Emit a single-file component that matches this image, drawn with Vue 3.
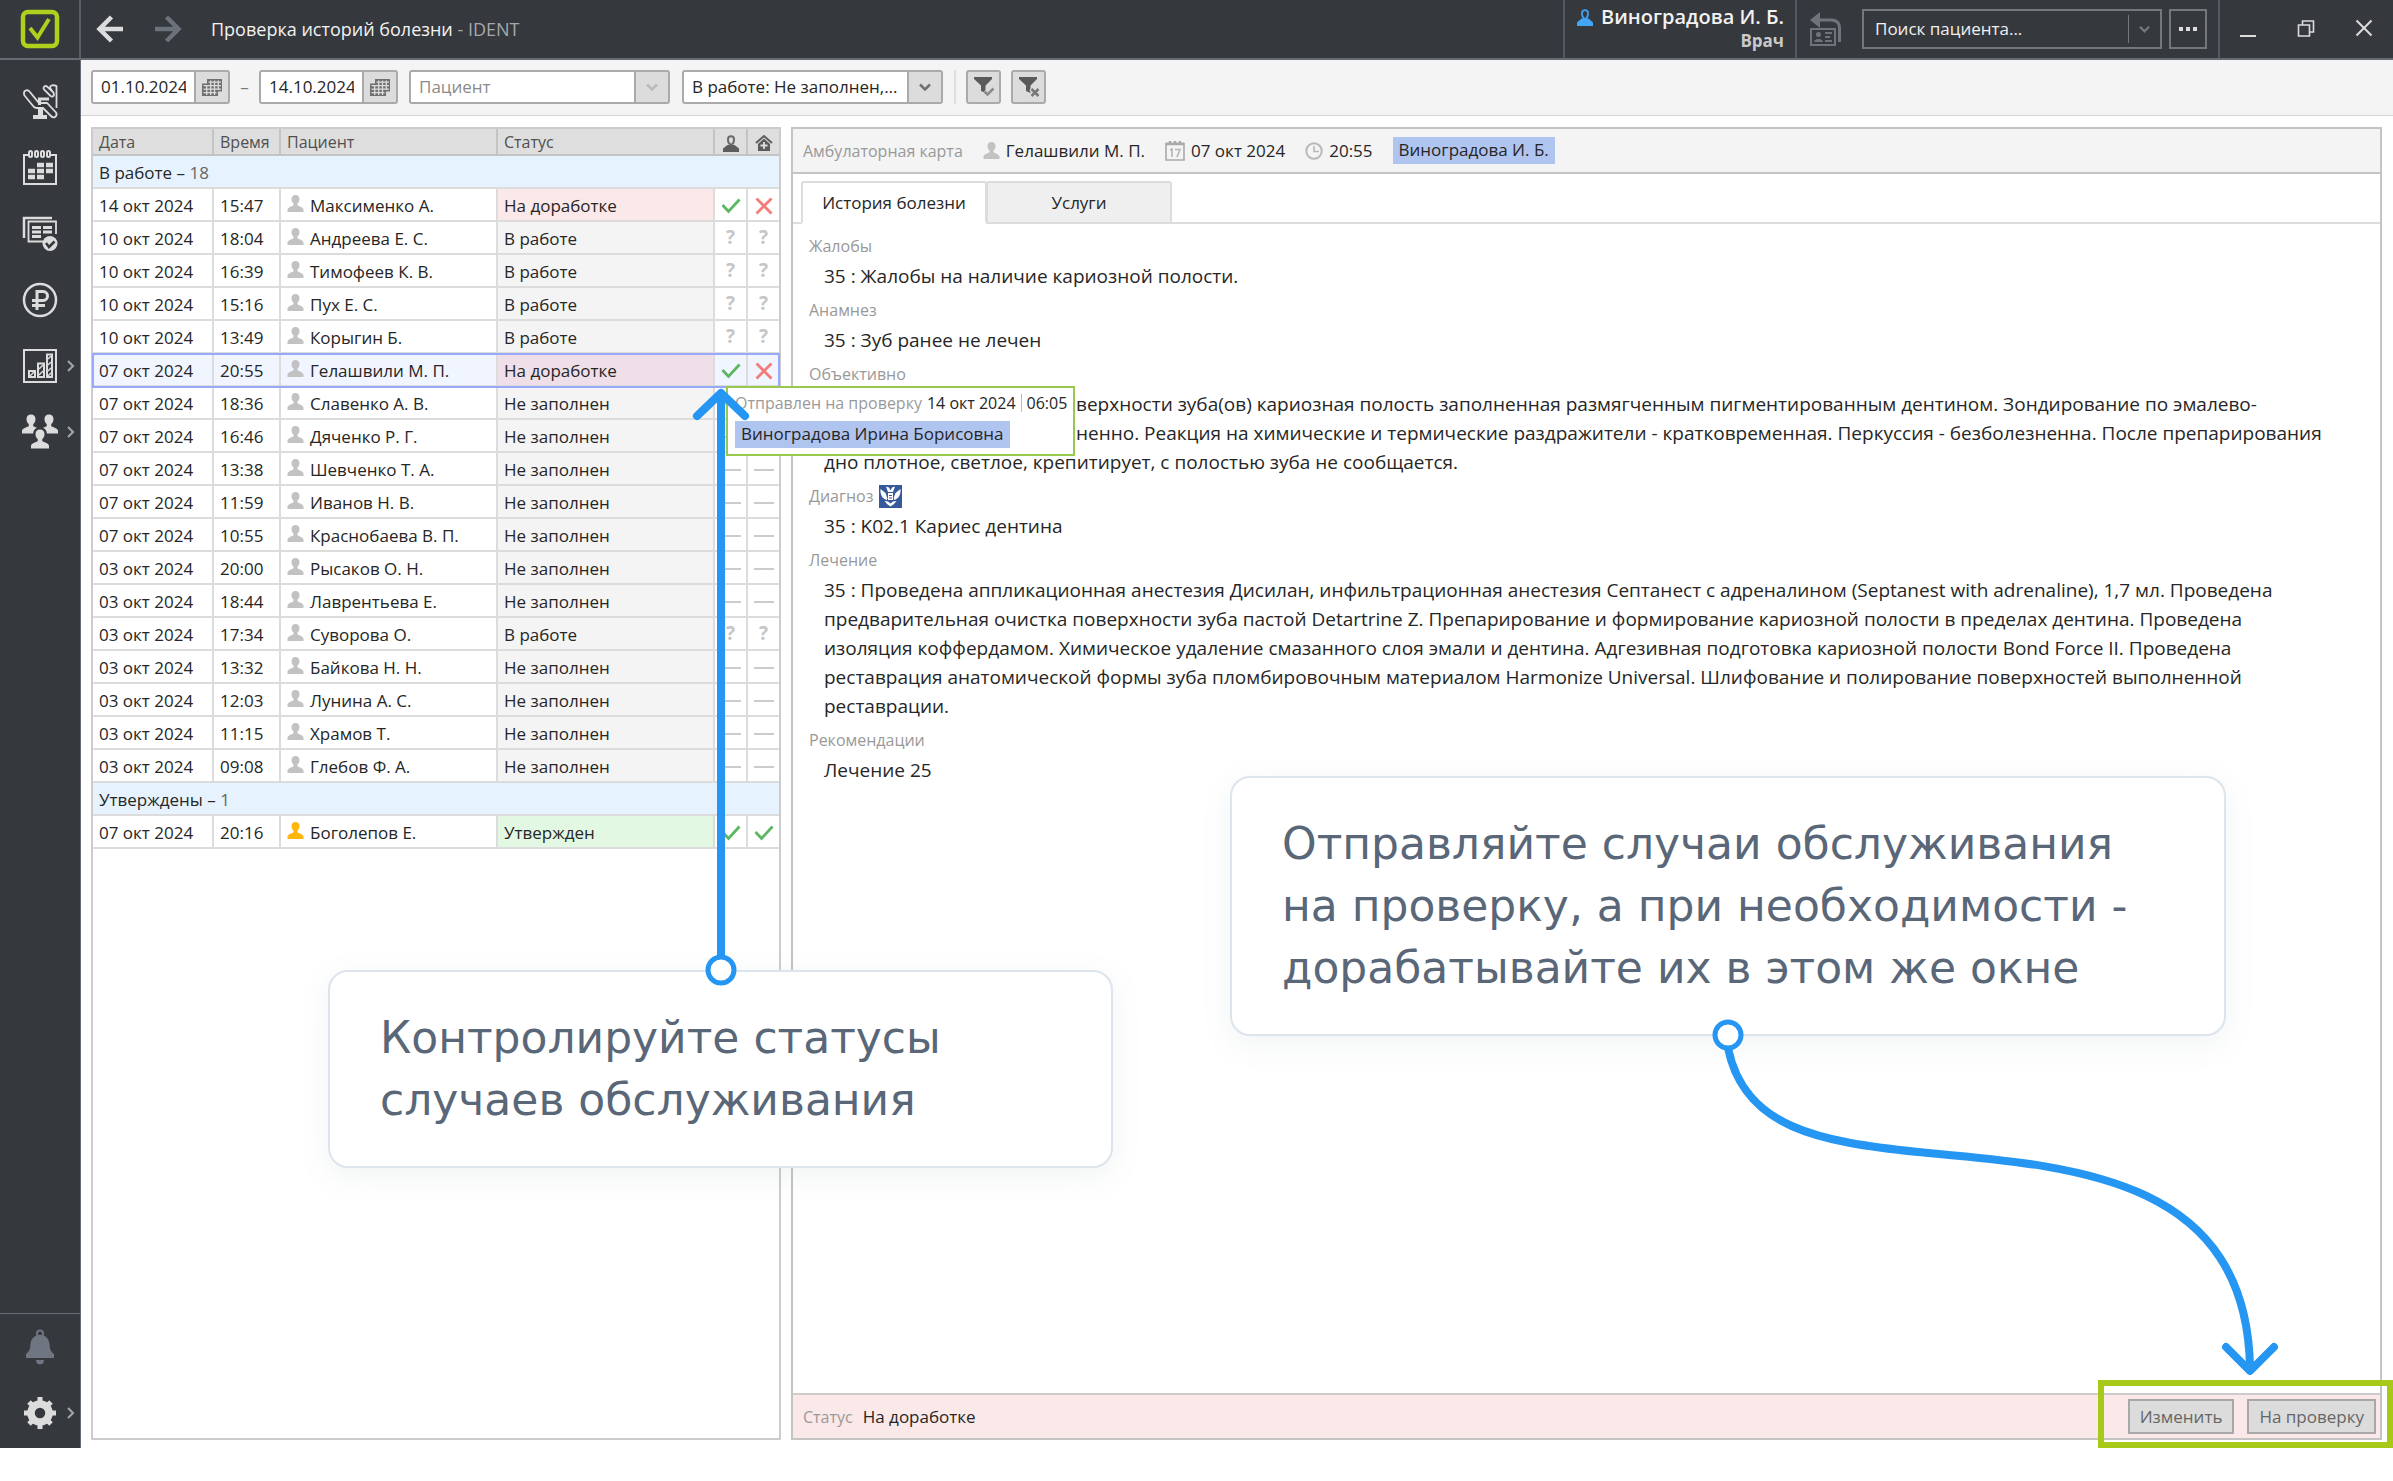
<script setup>
import { ref } from 'vue'

const dateFrom = ref('01.10.2024')
const dateTo = ref('14.10.2024')
const patientFilter = ref('')
const search = ref('')
const activeTab = ref('history')

const row = (date, time, patient, status, doctor, clinic, extra = {}) => ({ date, time, patient, status, doctor, clinic, ...extra })

const groups = [
  {
    title: 'В работе',
    count: 18,
    rows: [
      row('14 окт 2024', '15:47', 'Максименко А.', 'На доработке', 'yes', 'no'),
      row('10 окт 2024', '18:04', 'Андреева Е. С.', 'В работе', 'ask', 'ask'),
      row('10 окт 2024', '16:39', 'Тимофеев К. В.', 'В работе', 'ask', 'ask'),
      row('10 окт 2024', '15:16', 'Пух Е. С.', 'В работе', 'ask', 'ask'),
      row('10 окт 2024', '13:49', 'Корыгин Б.', 'В работе', 'ask', 'ask'),
      row('07 окт 2024', '20:55', 'Гелашвили М. П.', 'На доработке', 'yes', 'no', { selected: true }),
      row('07 окт 2024', '18:36', 'Славенко А. В.', 'Не заполнен', 'none', 'none'),
      row('07 окт 2024', '16:46', 'Дяченко Р. Г.', 'Не заполнен', 'none', 'none'),
      row('07 окт 2024', '13:38', 'Шевченко Т. А.', 'Не заполнен', 'none', 'none'),
      row('07 окт 2024', '11:59', 'Иванов Н. В.', 'Не заполнен', 'none', 'none'),
      row('07 окт 2024', '10:55', 'Краснобаева В. П.', 'Не заполнен', 'none', 'none'),
      row('03 окт 2024', '20:00', 'Рысаков О. Н.', 'Не заполнен', 'none', 'none'),
      row('03 окт 2024', '18:44', 'Лаврентьева Е.', 'Не заполнен', 'none', 'none'),
      row('03 окт 2024', '17:34', 'Суворова О.', 'В работе', 'ask', 'ask'),
      row('03 окт 2024', '13:32', 'Байкова Н. Н.', 'Не заполнен', 'none', 'none'),
      row('03 окт 2024', '12:03', 'Лунина А. С.', 'Не заполнен', 'none', 'none'),
      row('03 окт 2024', '11:15', 'Храмов Т.', 'Не заполнен', 'none', 'none'),
      row('03 окт 2024', '09:08', 'Глебов Ф. А.', 'Не заполнен', 'none', 'none'),
    ],
  },
  {
    title: 'Утверждены',
    count: 1,
    rows: [row('07 окт 2024', '20:16', 'Боголепов Е.', 'Утвержден', 'yes', 'yes', { vip: true })],
  },
]

const statusClass = { 'На доработке': 'rework', 'Утвержден': 'approved' }

// `indented` is the number of leading lines that start to the right of the open tooltip
const sections = [
  { label: 'Жалобы', lines: ['35 : Жалобы на наличие кариозной полости.'] },
  { label: 'Анамнез', lines: ['35 : Зуб ранее не лечен'] },
  {
    label: 'Объективно',
    indented: 2,
    lines: [
      'верхности зуба(ов) кариозная полость заполненная размягченным пигментированным дентином. Зондирование по эмалево-',
      'ненно. Реакция на химические и термические раздражители - кратковременная. Перкуссия - безболезненна. После препарирования',
      'дно плотное, светлое, крепитирует, с полостью зуба не сообщается.',
    ],
  },
  { label: 'Диагноз', emblem: true, lines: ['35 : K02.1 Кариес дентина'] },
  {
    label: 'Лечение',
    lines: [
      '35 : Проведена аппликационная анестезия Дисилан, инфильтрационная анестезия Септанест с адреналином (Septanest with adrenaline), 1,7 мл. Проведена',
      'предварительная очистка поверхности зуба пастой Detartrine Z. Препарирование и формирование кариозной полости в пределах дентина. Проведена',
      'изоляция коффердамом. Химическое удаление смазанного слоя эмали и дентина. Адгезивная подготовка кариозной полости Bond Force II. Проведена',
      'реставрация анатомической формы зуба пломбировочным материалом Harmonize Universal. Шлифование и полирование поверхностей выполненной',
      'реставрации.',
    ],
  },
  { label: 'Рекомендации', lines: ['Лечение 25'] },
]
</script>

<template>
  <div class="app">
    <svg class="defs" width="0" height="0" aria-hidden="true">
      <symbol id="person" viewBox="0 0 16 17">
        <path d="M8 0c2.600 0 4 1.800 4 4.200 0 1.800-.8 3.400-2 4.300v1.700c.6 1 5.700 1.600 6 4.300V17H0v-2.500c.3-2.700 5.400-3.300 6-4.300V8.500C4.800 7.600 4 6 4 4.200 4 1.800 5.400 0 8 0z" fill="currentColor" />
      </symbol>
      <symbol id="chevron" viewBox="0 0 12 8">
        <path d="M1 1.500l5 5 5-5" fill="none" stroke="currentColor" stroke-width="2.500" />
      </symbol>
      <symbol id="calendar-grid" viewBox="0 0 20 17">
        <path d="M5 0h15v12.500h-4V17H0V4.500h5z" fill="currentColor" />
        <path d="M6.500 3.200H19M1.500 6.700H19M1.500 10.200H19M1.500 13.700h13M4.700 6v10M8.700 1.500V16M12.500 1.500V16M16.300 1.500V11" stroke="#dcdcdc" stroke-width="1.300" />
      </symbol>
      <symbol id="funnel" viewBox="0 0 22 22">
        <path d="M1 1h18v2l-6.500 6.500V17L8 15V9.500L1 3z" fill="currentColor" />
      </symbol>
    </svg>

    <header class="titlebar">
      <div class="logo">
        <svg width="40" height="40" viewBox="0 0 40 40" fill="none" stroke="#aed11d">
          <rect x="3" y="3" width="34" height="34" rx="5" stroke-width="4.500" />
          <path d="M10 19l7.500 9.500L29 10" stroke-width="4" />
        </svg>
      </div>
      <button class="plain nav-arrow" aria-label="Назад">
        <svg width="28" height="28" viewBox="0 0 28 28" fill="none" stroke="#dcdcdc" stroke-width="4.500"><path d="M27 14H4M15.500 2L3.500 14l12 12" /></svg>
      </button>
      <button class="plain nav-arrow" aria-label="Вперёд">
        <svg width="28" height="28" viewBox="0 0 28 28" fill="none" stroke="#6c727c" stroke-width="4.500"><path d="M1 14h23M12.500 2l12 12-12 12" /></svg>
      </button>
      <h1>Проверка историй болезни <span>- IDENT</span></h1>

      <div class="user">
        <div class="user-name">
          <svg width="18" height="17" viewBox="0 0 18 17"><path d="M9 1.200c2 0 3 1.300 3 3.200S11 8.600 10 9.200v1.600M9 1.200c-2 0-3 1.300-3 3.200s1 4.200 2 4.800v1.600" fill="none" stroke="#42a0ef" stroke-width="1.800" /><path d="M5.500 9.500h7l4.500 4V17H1v-3.500z" fill="#42a5f5" /></svg>
          <b>Виноградова И. Б.</b>
        </div>
        <span class="role">Врач</span>
      </div>
      <div class="tools">
        <button class="plain" aria-label="Вернуться к карте">
          <svg width="32" height="34" viewBox="0 0 32 34" fill="none" stroke="#6f747c">
            <path d="M8 8h13c6 0 8.500 3 8.500 8v14" stroke-width="3" />
            <path d="M0 8l10-8v16z" fill="#6f747c" stroke="none" />
            <rect x="1" y="17" width="24" height="16" stroke-width="2" />
            <circle cx="8.500" cy="22.500" r="2.500" fill="#6f747c" stroke="none" />
            <path d="M4 30c0-4 9-4 9 0z" fill="#6f747c" stroke="none" />
            <path d="M15 21h7M15 25h5M15 29h7" stroke-width="2" />
          </svg>
        </button>
        <label class="search">
          <input v-model="search" type="text" placeholder="Поиск пациента..." aria-label="Поиск пациента" />
          <span class="search-drop"><svg width="11" height="8"><use href="#chevron" /></svg></span>
        </label>
        <button class="more" aria-label="Ещё"><i></i><i></i><i></i></button>
      </div>
      <div class="window-buttons">
        <button class="plain" aria-label="Свернуть"><svg width="18" height="20" viewBox="0 0 18 20"><path d="M1 17h16" stroke="#dcdcdc" stroke-width="2" /></svg></button>
        <button class="plain" aria-label="Восстановить"><svg width="18" height="20" viewBox="0 0 18 20" fill="none" stroke="#dcdcdc" stroke-width="1.600"><path d="M1.500 6h11v11h-11zM5.500 5.500V2h11v11h-4" /></svg></button>
        <button class="plain" aria-label="Закрыть"><svg width="18" height="20" viewBox="0 0 18 20" stroke="#dcdcdc" stroke-width="2"><path d="M1.500 1.500l15 15M16.500 1.500l-15 15" /></svg></button>
      </div>
    </header>

    <div class="workspace">
      <nav class="sidebar">
        <a href="#chair" aria-label="Приём">
          <svg width="36" height="36" viewBox="0 0 36 36" fill="none" stroke="#dcdcdc" stroke-width="1.800">
            <path d="M2 9c0-3 4-3.500 5.500-1.500L17 19h8l9 9.500c2 3.500-2 6.500-5 3.500l-8-8h-6.500c-1.500 0-2-.5-3-1.500L2.500 11.500C2 11 2 10 2 9z" />
            <path d="M17.500 21v-6H27" stroke-width="3" />
            <path d="M18.500 25v7" stroke-width="5" />
            <path d="M11 33h14" stroke-width="4" />
            <path d="M34.500 24V2c-3-1.500-6.500-.5-6.500 1.500 0 1 4 5 4 7 0 1.800-2 2.500-3.500 1.500L22 5.500c-1.500-2 1-4.500 3-3l7 6.500" />
          </svg>
        </a>
        <a href="#calendar" aria-label="Расписание">
          <svg width="36" height="36" viewBox="0 0 36 36" fill="none" stroke="#dcdcdc" stroke-width="2">
            <path d="M7 5H2v29h32V5h-5" />
            <rect x="7" y="1" width="3" height="6" rx="1.500" /><rect x="13" y="1" width="3" height="6" rx="1.500" /><rect x="19" y="1" width="3" height="6" rx="1.500" /><rect x="25" y="1" width="3" height="6" rx="1.500" />
            <path d="M15 15h7M24 15h7M6 21h7M15 21h7M24 21h7M6 27h7M15 27h7" stroke-width="4.500" />
          </svg>
        </a>
        <a href="#cases" aria-label="Проверка историй болезни">
          <svg width="36" height="36" viewBox="0 0 36 36" fill="none" stroke="#dcdcdc">
            <path d="M2 22V2h28" stroke-width="2.500" />
            <path d="M21 25.500H6.500v-20H34V18" stroke-width="1.800" />
            <path d="M10 11.500h9M21 11.500h9M10 16h9M21 16h9M10 20.500h9" stroke-width="3" />
            <circle cx="28" cy="27.500" r="7.500" fill="#dcdcdc" stroke="none" />
            <path d="M24 27l3 4 5.500-5.500" stroke="#35383d" stroke-width="2.500" />
          </svg>
        </a>
        <a href="#money" aria-label="Касса">
          <svg width="36" height="36" viewBox="0 0 36 36" fill="none" stroke="#dcdcdc">
            <circle cx="18" cy="18" r="16" stroke-width="2.500" />
            <path d="M15 28V9.500h6c6 0 6 9 0 9H10M10 23.500h13" stroke-width="3" />
          </svg>
        </a>
        <a href="#reports" aria-label="Отчёты">
          <svg width="36" height="36" viewBox="0 0 36 36" fill="none" stroke="#dcdcdc" stroke-width="2">
            <rect x="2" y="2" width="32" height="32" />
            <path d="M7 23h6v6H7zM16 15.500h6V29h-6zM25 6.500h5V29h-5z" />
            <path d="M8 28l4-4M17 21l4-4M17 27l4-4M26 11l3-3M26 17l3-3M26 23l3-3M26 28l3-3" stroke-width="1.500" />
          </svg>
          <svg class="more-arrow" width="8" height="12" viewBox="0 0 8 12"><path d="M1 1l5 5-5 5" fill="none" stroke="#a0a2a6" stroke-width="2.200" /></svg>
        </a>
        <a href="#staff" aria-label="Сотрудники">
          <svg width="36" height="36" viewBox="0 0 36 36" color="#dcdcdc">
            <use href="#person" x="0" y="0" width="18" height="20" /><use href="#person" x="18" y="0" width="18" height="20" />
            <circle cx="18" cy="20" r="7" fill="#35383d" />
            <use href="#person" x="9" y="15" width="18" height="20" />
          </svg>
          <svg class="more-arrow" width="8" height="12" viewBox="0 0 8 12"><path d="M1 1l5 5-5 5" fill="none" stroke="#a0a2a6" stroke-width="2.200" /></svg>
        </a>
        <div class="sidebar-bottom">
          <a href="#alerts" aria-label="Уведомления">
            <svg width="36" height="36" viewBox="0 0 36 36">
              <circle cx="18" cy="4.500" r="3" fill="none" stroke="#6f7681" stroke-width="2" />
              <path d="M18 6c6 0 9 4 9.500 9 .5 6 1 7 4.500 10v4H4v-4c3.500-3 4-4 4.500-10C9 10 12 6 18 6zM14 31h8c0 6-8 6-8 0z" fill="#6f7681" />
            </svg>
          </a>
          <a href="#settings" aria-label="Настройки">
            <svg width="36" height="36" viewBox="0 0 36 36" stroke="#dcdcdc" fill="none">
              <circle cx="18" cy="18" r="9" stroke-width="7.500" />
              <path d="M18 2v5M18 29v5M2 18h5M29 18h5M7 7l4 4M25 25l4 4M29 7l-4 4M11 25l-4 4" stroke-width="5" />
            </svg>
            <svg class="more-arrow" width="8" height="12" viewBox="0 0 8 12"><path d="M1 1l5 5-5 5" fill="none" stroke="#a0a2a6" stroke-width="2.200" /></svg>
          </a>
        </div>
      </nav>

      <main>
        <form class="filters" @submit.prevent>
          <div class="field date">
            <input v-model="dateFrom" type="text" aria-label="Дата с" />
            <button type="button" aria-label="Выбрать дату начала"><svg width="20" height="17"><use href="#calendar-grid" /></svg></button>
          </div>
          <span class="dash">–</span>
          <div class="field date">
            <input v-model="dateTo" type="text" aria-label="Дата по" />
            <button type="button" aria-label="Выбрать дату окончания"><svg width="20" height="17"><use href="#calendar-grid" /></svg></button>
          </div>
          <div class="field patient">
            <input v-model="patientFilter" type="text" placeholder="Пациент" aria-label="Пациент" />
            <button type="button" aria-label="Список пациентов"><svg width="12" height="8"><use href="#chevron" /></svg></button>
          </div>
          <div class="field status-filter">
            <select aria-label="Статус"><option>В работе: Не заполнен,...</option></select>
            <span class="drop"><svg width="12" height="8"><use href="#chevron" /></svg></span>
          </div>
          <span class="separator"></span>
          <button class="icon-button" type="button" aria-label="Применить фильтр">
            <svg width="22" height="22" viewBox="0 0 22 22"><use href="#funnel" width="22" height="22" /><path d="M11 15.500l3.500 3.500 6-6" fill="none" stroke="#dcdcdc" stroke-width="6" /><path d="M11.500 15.500l3 3 6-6" fill="none" stroke="#8a8a8a" stroke-width="2.500" /></svg>
          </button>
          <button class="icon-button" type="button" aria-label="Сбросить фильтр">
            <svg width="22" height="22" viewBox="0 0 22 22"><use href="#funnel" width="22" height="22" /><path d="M13 12.500l8 8M21 12.500l-8 8" stroke="#dcdcdc" stroke-width="5" /><path d="M13.500 13l7 7M20.500 13l-7 7" stroke="#777" stroke-width="2.500" /></svg>
          </button>
        </form>

        <div class="panels">
          <section class="cases">
            <table>
              <colgroup><col class="c-date" /><col class="c-time" /><col class="c-text" /><col class="c-text" /><col class="c-mark" /><col /></colgroup>
              <thead>
                <tr>
                  <th>Дата</th><th>Время</th><th>Пациент</th><th>Статус</th>
                  <th class="mark" aria-label="Врач">
                    <svg width="18" height="17" viewBox="0 0 18 17"><path d="M9 1.200c2 0 3 1.300 3 3.200S11 8.600 10 9.200v1.600M9 1.200c-2 0-3 1.300-3 3.200s1 4.200 2 4.800v1.600" fill="none" stroke="#6a6a6a" stroke-width="2" /><path d="M5.500 10h7l4.500 3.500V17H1v-3.500z" fill="#5c5c5c" /></svg>
                  </th>
                  <th class="mark" aria-label="Клиника">
                    <svg width="18" height="18" viewBox="0 0 18 18"><path d="M1 9l8-7 8 7" fill="none" stroke="#5c5c5c" stroke-width="2" /><path d="M9 4.500l6 5.500v7H3v-7z" fill="#5c5c5c" /><path d="M9 8v7M5.500 11.500h7" stroke="#dedede" stroke-width="1.800" /></svg>
                  </th>
                </tr>
              </thead>
              <tbody v-for="group in groups" :key="group.title">
                <tr class="group"><td colspan="6">{{ group.title }} – <span>{{ group.count }}</span></td></tr>
                <tr v-for="item in group.rows" :key="item.date + item.time" :class="{ selected: item.selected }">
                  <td>{{ item.date }}</td>
                  <td>{{ item.time }}</td>
                  <td><svg class="person" :class="{ vip: item.vip }" width="17" height="17"><use href="#person" /></svg>{{ item.patient }}</td>
                  <td class="status" :class="statusClass[item.status]">{{ item.status }}</td>
                  <td v-for="(mark, i) in [item.doctor, item.clinic]" :key="i" class="mark">
                    <svg v-if="mark === 'yes'" width="20" height="18" viewBox="0 0 20 18"><path d="M1.500 8l6 6.500L18.500 2.500" fill="none" stroke="#5cb860" stroke-width="2.800" /></svg>
                    <svg v-else-if="mark === 'no'" width="18" height="18" viewBox="0 0 18 18"><path d="M1.500 1.500l15 15M16.500 1.500l-15 15" stroke="#f27d78" stroke-width="2.800" /></svg>
                    <span v-else-if="mark === 'ask'" class="ask">?</span>
                    <span v-else class="blank"></span>
                  </td>
                </tr>
              </tbody>
            </table>
          </section>

          <section class="card">
            <div class="card-head">
              <span class="caption">Амбулаторная карта</span>
              <span class="fact"><svg class="person" width="17" height="17"><use href="#person" /></svg>Гелашвили М. П.</span>
              <span class="fact">
                <svg width="20" height="20" viewBox="0 0 20 20"><path d="M1 2.500h18v16.500H1z" fill="none" stroke="#a9a9a9" stroke-width="1.600" /><path d="M1 3h18M5 0v4M10 0v4M15 0v4" stroke="#a9a9a9" stroke-width="2.500" /><path d="M5 9l2-1v8M10 8.500h5l-3 7.500" fill="none" stroke="#b5b5b5" stroke-width="1.600" /></svg>
                07 окт 2024
              </span>
              <span class="fact">
                <svg width="18" height="18" viewBox="0 0 18 18" fill="none" stroke="#b9b9b9" stroke-width="2"><circle cx="9" cy="9" r="7.700" /><path d="M9 4v5.500h5" stroke-width="1.600" /></svg>
                20:55
              </span>
              <span class="doctor">Виноградова И. Б.</span>
            </div>

            <div class="tabs" role="tablist">
              <button role="tab" :aria-selected="activeTab === 'history'" :class="{ active: activeTab === 'history' }" @click="activeTab = 'history'">История болезни</button>
              <button role="tab" :aria-selected="activeTab === 'services'" :class="{ active: activeTab === 'services' }" @click="activeTab = 'services'">Услуги</button>
            </div>

            <div class="history">
              <template v-for="section in sections" :key="section.label">
                <h2>
                  {{ section.label }}
                  <svg v-if="section.emblem" width="23" height="23" viewBox="0 0 23 23">
                    <rect width="23" height="23" fill="#35599a" />
                    <path d="M1.500 4l5 4 2 5.500-1 1.500C3 13.500 1 9 1.500 4zM21.500 4l-5 4-2 5.500 1 1.500c4.500-1.500 6.500-6 6-11zM7 1.500l3 1 1.500 3 1.500-3 3-1-2 5.500h-5zM9 8h5v7H9zM5.500 16l3.500.5 2.500 2 2.500-2 3.500-.5-2.500 3-3.500 2.500L8 19z" fill="#fff" />
                    <path d="M10 10.500h3M10 13h3" stroke="#35599a" />
                  </svg>
                </h2>
                <p><span v-for="(line, i) in section.lines" :key="line" :class="{ indented: i < section.indented }">{{ line }}</span></p>
              </template>
            </div>

            <footer class="card-status">
              <span class="caption">Статус</span>
              <span class="value">На доработке</span>
              <button>Изменить</button>
              <button>На проверку</button>
            </footer>
          </section>
        </div>
      </main>
    </div>

    <div class="tooltip" role="tooltip">
      <div class="sent"><span>Отправлен на проверку</span> 14 окт 2024 <i></i> 06:05</div>
      <div class="doctor">Виноградова Ирина Борисовна</div>
    </div>

    <div class="callout statuses">Контролируйте статусы<br />случаев обслуживания</div>
    <svg class="arrow up" width="56" height="600" viewBox="0 0 56 600" fill="none" stroke="#2696f3" stroke-width="8" stroke-linecap="round" stroke-linejoin="round">
      <path d="M28 573V10M4 30L28 7l24 23" />
      <circle cx="28" cy="584" r="13" fill="#fff" stroke-width="5" />
    </svg>

    <div class="callout actions">Отправляйте случаи обслуживания<br />на проверку, а при необходимости -<br />дорабатывайте их в этом же окне</div>
    <svg class="arrow down" width="570" height="360" viewBox="0 0 570 360" fill="none" stroke="#2696f3" stroke-width="8" stroke-linecap="round" stroke-linejoin="round">
      <path d="M20 28C36 108 112 122 210 132C360 146 538 154 542 347M518 327l24 24 24-24" />
      <circle cx="20" cy="15" r="13" fill="#fff" stroke-width="5" />
    </svg>
    <div class="highlight"></div>
  </div>
</template>

<style>
body {
  margin: 0;
  background: #fff;
}
</style>

<style scoped>
* {
  box-sizing: border-box;
}

.app {
  position: relative;
  display: flex;
  flex-direction: column;
  min-height: calc(100vh - 33px);
  font: 17px/24px "Open Sans", "Noto Sans", sans-serif;
  color: #262626;
  overflow: hidden;
}

.defs {
  position: absolute;
}

svg {
  flex: none;
  overflow: visible;
}

button,
input,
select {
  font: inherit;
  color: inherit;
  margin: 0;
}

.plain {
  display: flex;
  padding: 0;
  border: 0;
  background: none;
}

/* Title bar */
.titlebar {
  display: flex;
  align-items: center;
  height: 60px;
  flex: none;
  background: #35383d;
  border-bottom: 2px solid #666c75;
  color: #f2f2f2;
}

.logo {
  display: flex;
  align-items: center;
  justify-content: center;
  width: 81px;
  height: 100%;
  border-right: 2px solid #5a5e65;
}

.nav-arrow {
  margin-left: 15px;
}

.nav-arrow + .nav-arrow {
  margin-left: 30px;
}

h1 {
  flex: 1;
  margin: 0 0 0 29px;
  font-size: 18px;
  font-weight: 400;
}

h1 span {
  color: #a6a8ab;
}

.user {
  display: flex;
  flex-direction: column;
  justify-content: center;
  align-items: flex-end;
  width: 234px;
  height: 100%;
  padding-right: 11px;
  border-left: 2px solid #55595f;
  border-right: 2px solid #55595f;
  font-size: 20px;
}

.user-name {
  display: flex;
  align-items: center;
  gap: 7px;
}

.user b {
  font-weight: 600;
}

.role {
  font-size: 17px;
  font-weight: 700;
  color: #c9cacc;
}

.tools {
  display: flex;
  align-items: center;
  gap: 7px;
  height: 100%;
  padding: 0 11px 0 13px;
  border-right: 2px solid #55595f;
}

.search {
  display: flex;
  align-items: center;
  width: 300px;
  height: 40px;
  margin-left: 13px;
  border: 2px solid #74777b;
}

.search input {
  flex: 1;
  min-width: 0;
  padding: 0 11px;
  border: 0;
  background: none;
}

.search input::placeholder {
  color: #f0f0f0;
  opacity: 1;
}

.search-drop {
  display: flex;
  align-items: center;
  justify-content: center;
  width: 32px;
  height: 28px;
  border-left: 1px solid #74777b;
  color: #74777b;
}

.more {
  display: flex;
  align-items: center;
  justify-content: center;
  gap: 3px;
  width: 38px;
  height: 40px;
  padding: 0;
  border: 2px solid #74777b;
  background: none;
}

.more i {
  width: 4px;
  height: 4px;
  background: #dcdcdc;
}

.window-buttons {
  display: flex;
  gap: 40px;
  padding: 0 20px 0 19px;
}

/* Sidebar */
.workspace {
  display: flex;
  flex: 1;
}

.sidebar {
  display: flex;
  flex-direction: column;
  gap: 30px;
  width: 81px;
  flex: none;
  padding-top: 24px;
  background: #35383d;
  border-right: 1px solid #666c75;
}

.sidebar a {
  display: flex;
  align-items: center;
  gap: 9px;
  height: 36px;
  padding-left: 22px;
}

.sidebar-bottom {
  display: flex;
  flex-direction: column;
  gap: 30px;
  margin-top: auto;
  padding: 15px 0 17px;
  border-top: 1px solid #666c75;
}

/* Filters */
main {
  display: flex;
  flex-direction: column;
  flex: 1;
  min-width: 0;
}

.filters {
  display: flex;
  align-items: center;
  height: 56px;
  padding: 0 10px 1px;
  background: #f4f4f4;
  border-bottom: 1px solid #d4d4d4;
}

.field {
  display: flex;
  height: 34px;
  border: 2px solid #aaa;
  border-radius: 3px;
  background: #fff;
}

.field input,
.field select {
  flex: 1;
  min-width: 0;
  padding: 0 8px;
  border: 0;
  background: none;
  appearance: none;
}

.field input::placeholder {
  color: #8b8b8b;
  opacity: 1;
}

.field button,
.field .drop {
  display: flex;
  align-items: center;
  justify-content: center;
  width: 34px;
  padding: 0;
  border: 0;
  border-left: 2px solid #aaa;
  background: #dcdcdc;
  color: #707070;
}

.date {
  width: 139px;
}

.dash {
  width: 29px;
  text-align: center;
  color: #777;
}

.patient {
  width: 261px;
  margin: 0 12px 0 11px;
}

.patient button {
  color: #bbb;
}

.status-filter {
  width: 261px;
}

.separator {
  width: 2px;
  height: 34px;
  margin: 0 10px 0 11px;
  background: #dedede;
}

.icon-button {
  display: flex;
  align-items: center;
  justify-content: center;
  width: 35px;
  height: 34px;
  margin-right: 10px;
  padding: 0;
  border: 2px solid #aaa;
  border-radius: 3px;
  background: #dcdcdc;
  color: #5a5a5a;
}

/* Case list */
.panels {
  display: flex;
  flex: 1;
  gap: 10px;
  padding: 11px 11px 8px 10px;
}

.cases {
  width: 690px;
  flex: none;
  border: 2px solid #ccc;
}

table {
  width: 100%;
  table-layout: fixed;
  border-collapse: separate;
  border-spacing: 0;
}

.c-date {
  width: 121px;
}

.c-time {
  width: 67px;
}

.c-text {
  width: 217px;
}

.c-mark {
  width: 33px;
}

th,
td {
  height: 33px;
  padding: 3px 0 0 6px;
  border-right: 2px solid #dcdcdc;
  border-bottom: 2px solid #dcdcdc;
  line-height: 24px;
  text-align: left;
  white-space: nowrap;
}

th {
  height: 27px;
  padding-top: 0;
  background: #dedede;
  border-color: #c4c4c4;
  font-size: 16px;
  font-weight: 400;
  color: #505050;
}

th:last-child,
td:last-child {
  border-right: 0;
}

.group td {
  background: #e6f3fe;
}

.group span {
  color: #666;
}

.person {
  margin-right: 6px;
  color: #c2c2c2;
}

.person.vip {
  color: #ffb70d;
}

.status {
  background: #f4f4f4;
}

.status.rework {
  background: #fbe8e8;
}

.status.approved {
  background: #e2f8e3;
}

.mark {
  padding: 0;
  text-align: center;
}

.mark svg {
  vertical-align: middle;
}

.ask {
  font-size: 19px;
  font-weight: 700;
  color: #c6c6c6;
}

.blank {
  display: inline-block;
  width: 20px;
  height: 2px;
  background: #ccc;
  vertical-align: middle;
}

.selected {
  outline: 2px solid #98a9fb;
  outline-offset: -1px;
}

.selected td {
  background: #f1f5ff;
}

.selected .status {
  background: #eedfe8;
}

/* Patient card */
.card {
  display: flex;
  flex-direction: column;
  flex: 1;
  min-width: 0;
  border: 2px solid #c4c4c4;
}

.card-head {
  display: flex;
  align-items: center;
  height: 45px;
  padding-left: 10px;
  background: #f4f4f4;
  border-bottom: 2px solid #c4c4c4;
}

.caption {
  font-size: 16px;
  color: #999;
}

.fact {
  display: flex;
  align-items: center;
  gap: 6px;
  margin-left: 20px;
}

.fact .person {
  margin: 0;
}

.doctor {
  padding: 1px 6px 2px;
  background: #b0c4f0;
}

.card-head .doctor {
  margin-left: 20px;
}

.tabs {
  display: flex;
  height: 50px;
  padding: 7px 0 0 8px;
  box-shadow: inset 0 -2px #dcdcdc;
}

.tabs button {
  width: 186px;
  padding: 0;
  border: 2px solid #dcdcdc;
  border-radius: 3px 3px 0 0;
  background: #efefef;
}

.tabs button + button {
  margin-left: -1px;
}

.tabs .active {
  background: #fff;
  border-bottom-color: #fff;
}

.history {
  flex: 1;
  padding: 8px 16px;
}

.history h2 {
  display: flex;
  align-items: center;
  gap: 6px;
  height: 28px;
  margin: 0;
  font-size: 16px;
  font-weight: 400;
  color: #999;
}

.history p {
  margin: 2px 0 5px 15px;
  font-size: 19px;
  line-height: 29px;
}

.history p span {
  display: block;
  white-space: nowrap;
}

.history .indented {
  padding-left: 252px;
}

.card-status {
  display: flex;
  align-items: center;
  height: 45px;
  padding: 0 4px 0 10px;
  background: #fbe8e8;
  border-top: 2px solid #ccc;
}

.card-status .value {
  flex: 1;
  margin-left: 10px;
}

.card-status button {
  height: 35px;
  padding: 0 10px;
  border: 2px solid #a8a8a8;
  background: #dcdcdc;
  color: #666;
}

.card-status button + button {
  margin-left: 13px;
}

/* Overlays */
.tooltip {
  position: absolute;
  left: 726px;
  top: 386px;
  width: 349px;
  height: 70px;
  padding: 3px 7px;
  border: 2px solid #98c94e;
  background: #fff;
}

.sent {
  display: flex;
  align-items: center;
  gap: 5px;
  font-size: 16px;
  white-space: nowrap;
}

.sent span {
  color: #9a9a9a;
}

.sent i {
  flex: none;
  width: 1px;
  height: 18px;
  background: #bbb;
}

.tooltip .doctor {
  display: inline-block;
  margin-top: 6px;
}

.callout {
  position: absolute;
  padding: 35px 50px;
  border: 2px solid #dde4ec;
  border-radius: 20px;
  background: #fff;
  box-shadow: 0 8px 32px rgba(80, 100, 120, 0.08);
  color: #596778;
  font: 44px/62px "DejaVu Sans", sans-serif;
  white-space: nowrap;
}

.statuses {
  left: 328px;
  top: 970px;
  width: 785px;
}

.actions {
  right: 167px;
  top: 776px;
  width: 996px;
}

.arrow {
  position: absolute;
}

.up {
  left: 693px;
  top: 386px;
}

.down {
  right: 115px;
  top: 1020px;
}

.highlight {
  position: absolute;
  right: 0;
  bottom: 0;
  width: 295px;
  height: 68px;
  border: 6px solid #a6ca17;
}
</style>
